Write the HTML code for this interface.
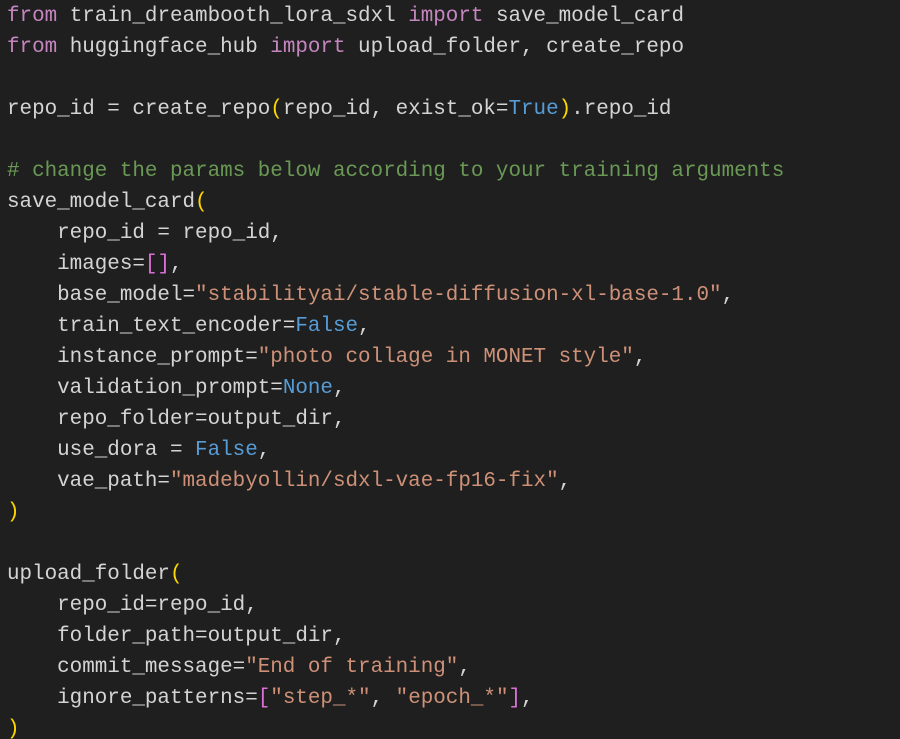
<!DOCTYPE html>
<html><head><style>
html,body{margin:0;padding:0;background:#1f1f1f;width:900px;height:739px;overflow:hidden}
pre{margin:0;padding:1px 0 0 7px;font-family:"Liberation Mono",monospace;font-size:20.9px;line-height:31px;color:#d4d4d4;white-space:pre}
.k{color:#c586c0}.s{color:#ce9178}.c{color:#6a9955}.b{color:#569cd6}.p{color:#ffd700}.q{color:#da70d6}
</style></head><body><pre><span class="k">from</span> train_dreambooth_lora_sdxl <span class="k">import</span> save_model_card
<span class="k">from</span> huggingface_hub <span class="k">import</span> upload_folder, create_repo

repo_id = create_repo<span class="p">(</span>repo_id, exist_ok=<span class="b">True</span><span class="p">)</span>.repo_id

<span class="c"># change the params below according to your training arguments</span>
save_model_card<span class="p">(</span>
    repo_id = repo_id,
    images=<span class="q">[]</span>,
    base_model=<span class="s">"stabilityai/stable-diffusion-xl-base-1.0"</span>,
    train_text_encoder=<span class="b">False</span>,
    instance_prompt=<span class="s">"photo collage in MONET style"</span>,
    validation_prompt=<span class="b">None</span>,
    repo_folder=output_dir,
    use_dora = <span class="b">False</span>,
    vae_path=<span class="s">"madebyollin/sdxl-vae-fp16-fix"</span>,
<span class="p">)</span>

upload_folder<span class="p">(</span>
    repo_id=repo_id,
    folder_path=output_dir,
    commit_message=<span class="s">"End of training"</span>,
    ignore_patterns=<span class="q">[</span><span class="s">"step_*"</span>, <span class="s">"epoch_*"</span><span class="q">]</span>,
<span class="p">)</span></pre></body></html>
